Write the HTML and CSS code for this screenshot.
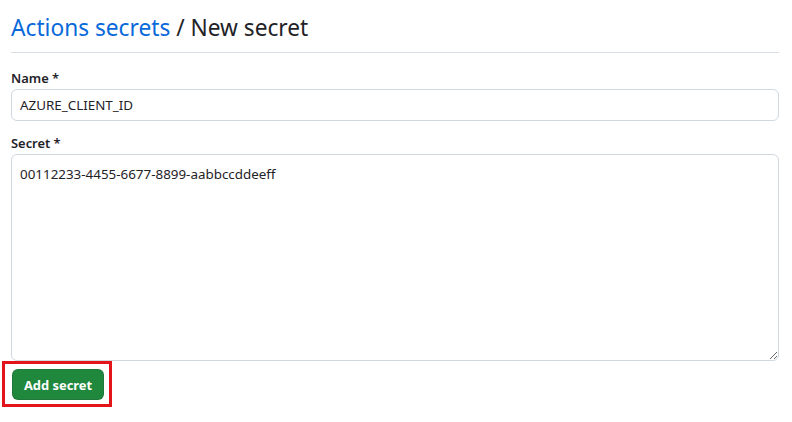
FILE: index.html
```html
<!DOCTYPE html>
<html>
<head>
<meta charset="utf-8">
<link rel="stylesheet" href="styles.css">
</head>
<body>
<div class="page">
  <h2 class="title"><a class="crumb" href="#">Actions secrets</a> / New secret</h2>
  <form class="form">
    <div class="field">
      <label class="label">Name *</label>
      <input class="input" type="text" value="AZURE_CLIENT_ID">
    </div>
    <div class="field">
      <label class="label">Secret *</label>
      <textarea class="textarea">00112233-4455-6677-8899-aabbccddeeff</textarea>
    </div>
    <div class="actions">
      <span class="highlight"><button class="btn" type="button">Add secret</button></span>
    </div>
  </form>
</div>
</body>
</html>
```
FILE: styles.css
```css
* { box-sizing: border-box; }
html, body { margin: 0; padding: 0; background: #ffffff; }
body {
  font-family: "Noto Sans", "Open Sans", sans-serif;
  color: #1f2328;
}
.page {
  width: 768px;
  margin-left: 11px;
  padding-top: 11px;
}
.title {
  margin: 0;
  font-size: 22.7px;
  font-weight: 400;
  line-height: 34px;
  padding-bottom: 7px;
  border-bottom: 1px solid #d8dee4;
}
.crumb { color: #0969da; text-decoration: none; }
.form { display: flex; flex-direction: column; padding-top: 13px; }
.field { display: flex; flex-direction: column; margin-bottom: 10px; }
.label {
  font-size: 12.9px;
  font-weight: 600;
  line-height: 20px;
  padding-top: 2px;
  margin-bottom: 1px;
}
.input, .textarea {
  font-family: inherit;
  font-size: 13.4px;
  color: #1f2328;
  border: 1px solid #d0d7de;
  border-radius: 6px;
  padding: 5px 8px;
  width: 100%;
  background: #fff;
  outline: none;
}
.input { height: 32px; line-height: 20px; }
.textarea { height: 207px; padding-top: 9px; line-height: 20px; resize: vertical; }
.actions { display: flex; margin-top: -10px; }
.highlight {
  display: inline-flex;
  border: 3px solid #e3141a;
  padding: 5px 5px 4px 7px;
  margin-left: -9px;
}
.btn {
  font-family: inherit;
  font-size: 12.9px;
  font-weight: 700;
  color: #ffffff;
  background: #1f883d;
  border: 1px solid rgba(31,35,40,0.15);
  border-radius: 6px;
  height: 31px;
  width: 92px;
  padding: 0;
}
```
